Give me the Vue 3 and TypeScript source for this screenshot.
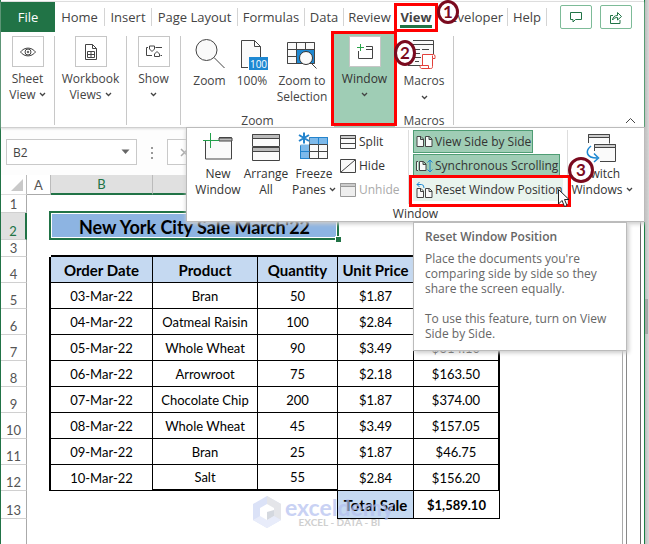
<script setup lang="ts">
import { ref } from 'vue'

interface Order {
  row: number
  date: string
  product: string
  qty: number
  price: string
  total: string
}

const tabs: string[] = ['Home', 'Insert', 'Page Layout', 'Formulas', 'Data', 'Review', 'View', 'Developer', 'Help']
const activeTab = ref('View')
const cell = ref('B2')

const orders: Order[] = [
  { row: 5, date: '03-Mar-22', product: 'Bran', qty: 50, price: '$1.87', total: '' },
  { row: 6, date: '04-Mar-22', product: 'Oatmeal Raisin', qty: 100, price: '$2.84', total: '' },
  { row: 7, date: '05-Mar-22', product: 'Whole Wheat', qty: 90, price: '$3.49', total: '$314.10' },
  { row: 8, date: '06-Mar-22', product: 'Arrowroot', qty: 75, price: '$2.18', total: '$163.50' },
  { row: 9, date: '07-Mar-22', product: 'Chocolate Chip', qty: 200, price: '$1.87', total: '$374.00' },
  { row: 10, date: '08-Mar-22', product: 'Whole Wheat', qty: 45, price: '$3.49', total: '$157.05' },
  { row: 11, date: '09-Mar-22', product: 'Bran', qty: 25, price: '$1.87', total: '$46.75' },
  { row: 12, date: '10-Mar-22', product: 'Salt', qty: 55, price: '$2.84', total: '$156.20' },
]
</script>

<template>
  <div class="page">
    <main class="window">
      <header class="top">
        <nav class="tabs">
          <button class="file" type="button">File</button>
          <button
            v-for="t in tabs"
            :key="t"
            type="button"
            class="tab"
            :class="{ active: t === activeTab }"
            @click="activeTab = t"
          >
            <span>{{ t }}</span>
            <i v-if="t === 'View'" class="mark mark-view"></i>
            <b v-if="t === 'View'" class="badge badge-one">1</b>
          </button>
          <div class="actions">
            <button type="button" aria-label="Comments">
              <svg width="14" height="13" viewBox="0 0 14 13"><path d="M1.5 1.5h11v7H6.500L4 11V8.500H1.500z" /></svg>
            </button>
            <button type="button" aria-label="Share">
              <svg width="14" height="13" viewBox="0 0 14 13"><path d="M4 4.500H1.500v8h9.500V9M3.500 9c.5-3 2-4.500 5-4.500V1.500l4 4-4 3.500V6.500C6.500 6.500 5 7 3.500 9z" /></svg>
            </button>
          </div>
        </nav>

        <div class="ribbon">
          <button class="group sheet-view" type="button">
            <span class="box">
              <svg width="18" height="12" viewBox="0 0 18 12"><path d="M1.500 6C5.500.8 12.500.8 16.500 6 12.500 11.200 5.500 11.200 1.500 6z" /><circle cx="9" cy="6" r="3" /><circle cx="9" cy="6" r=".8" /></svg>
            </span>
            <span>Sheet<br />View <svg class="chev" width="7" height="5" viewBox="0 0 7 5"><path d="M1 1l2.500 2.500L6 1" /></svg></span>
          </button>
          <button class="group workbook" type="button">
            <span class="box">
              <svg width="14" height="18" viewBox="0 0 14 18"><path d="M1.500 1.500h7l4 4v11h-11zM8.500 1.500v4h4M3.500 8.500h7v6h-7zM7 8.500v6M3.500 11.500h7" /></svg>
            </span>
            <span>Workbook<br />Views <svg class="chev" width="7" height="5" viewBox="0 0 7 5"><path d="M1 1l2.500 2.500L6 1" /></svg></span>
          </button>
          <button class="group show" type="button">
            <span class="box">
              <svg width="18" height="13" viewBox="0 0 18 13"><path d="M3 2.500H1.500v8H7M10.500 2.500H17M4.500 1h5v3L7 6.500 4.500 4zM9.500 11.500V9L12 6.500 14.500 9v2.500zM15.500 10.500H17" /></svg>
            </span>
            <span>Show<br /><svg class="chev" width="7" height="5" viewBox="0 0 7 5"><path d="M1 1l2.500 2.500L6 1" /></svg></span>
          </button>

          <section class="zoom-group">
            <div class="zoom-items">
              <button type="button">
                <svg width="32" height="32" viewBox="0 0 32 32"><circle cx="12.500" cy="12" r="10.500" class="pale" /><path d="M20 19.500L30.500 30" /></svg>
                Zoom
              </button>
              <button type="button">
                <svg width="32" height="32" viewBox="0 0 32 32"><path d="M5.500 29.500v-27h13l6 6v13M18.500 2.500v6h6" class="pale" /><path d="M5 29.500h7" /><rect x="13" y="19" width="19" height="13" fill="#1e88d2" stroke="none" /><text x="22.500" y="29.500">100</text></svg>
                100%
              </button>
              <button type="button">
                <svg width="32" height="32" viewBox="0 0 32 32"><path d="M1.500 4.500h27v21h-27z" class="pale" /><path d="M10 12h18v13H10z" fill="#1e88d2" stroke="none" /><path d="M1.500 11.500h27M1.500 18.500h9M10.500 4.500v21M19.500 4.500v7M1.500 25.500h12M28.500 4.500v21" /><circle cx="20" cy="20" r="6.500" class="pale" stroke="#333" /><path d="M24.500 24.500l6 6" /></svg>
                Zoom to<br />Selection
              </button>
            </div>
            <span class="caption">Zoom</span>
          </section>

          <button class="group window-group" type="button">
            <span class="box">
              <svg width="18" height="17" viewBox="0 0 18 17"><path d="M10 3.500h6.500v12h-14V8M10 6.500h6.500" /><path d="M1 4.500h7M4.500 1v7" stroke="#2aa34a" /></svg>
            </span>
            <span>Window<br /><svg class="chev" width="7" height="5" viewBox="0 0 7 5"><path d="M1 1l2.500 2.500L6 1" /></svg></span>
            <i class="mark mark-window"></i>
          </button>

          <section class="macros">
            <b class="badge badge-two">2</b>
            <button type="button">
              <svg width="32" height="32" viewBox="0 0 32 32"><path d="M3.500 2.500h22v24h-22z" fill="#fafafa" stroke="none" /><path d="M5 2.500h20.500v14M5 6.500h20.500" /><path d="M0 27.500h13M7 11.500h5M14 11.500h7M7 15.500h5M7 19.500h6M7 23.500h4" /><path d="M14.500 16.500h11c2 0 1.500 3 1.500 4h-2.500v8c0 2-1 2-2 2h-9c-1 0-2-2-1-3h2zM24.500 20.500v-3M13.500 27.500h7v3" fill="#fff" stroke="#e2403a" /></svg>
              Macros<br /><svg class="chev" width="7" height="5" viewBox="0 0 7 5"><path d="M1 1l2.500 2.500L6 1" /></svg>
            </button>
            <span class="caption">Macros</span>
          </section>
          <button class="collapse" type="button" aria-label="Collapse ribbon">
            <svg width="11" height="7" viewBox="0 0 11 7"><path d="M1 6l4.500-4.500L10 6" /></svg>
          </button>
        </div>

        <section class="popup">
          <div class="popup-row">
            <button class="big new-window" type="button">
              <svg width="32" height="32" viewBox="0 0 32 32"><path d="M3.500 11v18h26V7.500H17" class="pale" /><path d="M17 8h13v3H17z" fill="#bbb" stroke="#444" /><path d="M1 10.500h16M8.500 3v15" stroke="#22a04a" /></svg>
              <span>New<br />Window</span>
            </button>
            <button class="big arrange" type="button">
              <svg width="32" height="32" viewBox="0 0 32 32"><path d="M2.500 4.500h27v12h-27zM2.500 17.500h27v13h-27z" class="pale" /><path d="M2.500 4.500h27v4h-27zM2.500 17.500h27v4h-27z" fill="#bbb" /></svg>
              <span>Arrange<br />All</span>
            </button>
            <button class="big freeze" type="button">
              <svg width="32" height="32" viewBox="0 0 32 32"><path d="M11.500 7.500h18v21h-27v-13h9z" class="pale" /><path d="M11.500 7.500h18v7h-18zM2.500 14.500h9v14h-9z" fill="#7db9ea" stroke="none" /><path d="M11.500 14.500h18v14h-18zM20.500 14.500v14M11.500 21.500h18" /><path d="M12 7.500h17.500v7M20.500 7.500v7M2.500 16v12.500h9M2.500 21.500h9" stroke="#2384cd" /><path d="M6 2.500v11M1 5l10 6M11 5L1 11" stroke="#2384cd" stroke-width="2" /></svg>
              <span>Freeze<br />Panes <svg class="chev" width="7" height="5" viewBox="0 0 7 5"><path d="M1 1l2.500 2.500L6 1" /></svg></span>
            </button>
            <div class="small-list">
              <button type="button"><svg width="16" height="14" viewBox="0 0 16 14"><path d="M.5.5h15v13H.5z" class="pale" /><path d="M.5.500h15v3H.500z" fill="#ccc" /><path d="M.5 8.500h15" /></svg>Split</button>
              <button type="button"><svg width="16" height="14" viewBox="0 0 16 14"><path d="M.5.5h15v13H.5zM1 13L15 1" class="pale" /></svg>Hide</button>
              <button type="button" disabled><svg width="16" height="14" viewBox="0 0 16 14"><path d="M.5.5h15v13H.5z" fill="#eee" stroke="#999" /><path d="M.5.500h15v3H.500z" fill="#ccc" stroke="#999" /></svg>Unhide</button>
            </div>
            <div class="toggles">
              <button type="button" class="on side"><svg width="17" height="13" viewBox="0 0 17 13"><path d="M1 1.500h4l2.500 2.500v7.500H1zM9.500 1.500h4L16 4v7.500H9.500zM4.500 1.500v3h3M13 1.500v3h3" fill="#f6faf8" /></svg>View Side by Side</button>
              <button type="button" class="on sync"><svg width="17" height="14" viewBox="0 0 17 14"><path d="M2 2.500H.5v9H2M3.500 2.500h4l2.500 2.500v6.500H3.500zM7 2.500v3h3" fill="#f6faf8" /><path d="M14 1v12M11.500 3.500L14 1l2.500 2.500M11.500 10.500L14 13l2.500-2.500" stroke="#1e88d2" /></svg>Synchronous Scrolling</button>
              <button type="button" class="hover"><svg width="17" height="16" viewBox="0 0 17 16"><path d="M1 6.500h4l2.500 2.500v6.500H1zM9.500 6.500h4L16 9v6.500H9.500zM4.500 6.500v3h3M13 6.500v3h3" class="pale" /><path d="M3.500 0L1 2.500 3.500 5M1 2.500h4.500Q8 2.500 8 6" stroke="#1e88d2" /></svg>Reset Window Position
                <i class="mark mark-reset"></i>
                <b class="badge badge-three">3</b>
                <svg class="cursor" width="14" height="20" viewBox="0 0 14 20"><path d="M1.500 1.500v14.500l3.500-3.500 2.500 6 2.500-1-2.500-6h4.500z" fill="#fff" stroke="#222" /></svg>
              </button>
            </div>
            <button class="big switch" type="button">
              <svg width="32" height="32" viewBox="0 0 32 32"><path d="M2.500 4.500h21v9h-21" fill="#fafafa" stroke="none" /><path d="M2.500 13V4.500h21v9" /><path d="M2.500 4.500h21v3h-21z" fill="#ccc" /><path d="M8.500 14.500h21v17h-21z" fill="#fafafa" stroke="none" /><path d="M8.500 21v-6.500h21v17H14" /><path d="M8.500 14.500h21v3h-21z" fill="#ccc" /><path d="M5 16c-6 5-5 12 6 12M8 23.500l4.500 4.500L8 32" stroke="#1e88d2" stroke-width="1.500" /></svg>
              <span>Switch<br />Windows <svg class="chev" width="7" height="5" viewBox="0 0 7 5"><path d="M1 1l2.500 2.500L6 1" /></svg></span>
            </button>
          </div>
          <span class="caption">Window</span>
          <aside class="tooltip" role="tooltip">
            <h2>Reset Window Position</h2>
            <p>Place the documents you're<br />comparing side by side so they<br />share the screen equally.</p>
            <p>To use this feature, turn on View<br />Side by Side.</p>
          </aside>
        </section>
      </header>

      <div class="formula">
        <label class="name-box">
          <input v-model="cell" aria-label="Name box" />
          <svg width="9" height="6" viewBox="0 0 9 6"><path d="M.5.5h8l-4 4.500z" fill="#666" stroke="none" /></svg>
        </label>
        <span class="dots"><i></i><i></i><i></i></span>
        <div class="entry">
          <svg width="9" height="9" viewBox="0 0 9 9"><path d="M1 1l7 7M8 1L1 8" stroke="#aaa" stroke-width="1.500" /></svg>
        </div>
      </div>

      <div class="body">
        <div class="sheet">
          <table>
            <colgroup>
              <col class="c-row" /><col class="c-a" /><col class="c-b" /><col class="c-c" /><col class="c-d" /><col class="c-e" /><col class="c-f" /><col />
            </colgroup>
            <thead>
              <tr class="letters">
                <td class="corner"><svg width="12" height="12" viewBox="0 0 12 12"><path d="M12 0v12H0z" fill="#c9c9c9" stroke="none" /></svg></td>
                <th>A</th><th class="sel">B</th><th class="sel"></th><th class="sel"></th><th></th><th></th><th></th>
              </tr>
            </thead>
            <tbody>
              <tr class="r1"><th>1</th><td colspan="7"></td></tr>
              <tr class="r2">
                <th class="sel">2</th><td></td>
                <td class="banner" colspan="3">New York City Sale March'22<i></i></td>
                <td colspan="3"></td>
              </tr>
              <tr class="r3"><th>3</th><td></td><td class="edge" colspan="5"></td><td></td></tr>
              <tr class="head">
                <th>4</th><td class="left"></td>
                <td class="c">Order Date</td><td class="c">Product</td><td class="c">Quantity</td><td class="c">Unit Price</td><td class="c last"></td><td></td>
              </tr>
              <tr v-for="o in orders" :key="o.row" :class="{ end: o.row === 12 }">
                <th>{{ o.row }}</th><td class="left"></td>
                <td class="c">{{ o.date }}</td><td class="c thick">{{ o.product }}</td><td class="c thick">{{ o.qty }}</td><td class="c">{{ o.price }}</td><td class="c last">{{ o.total }}</td><td></td>
              </tr>
              <tr class="sum">
                <th>13</th><td></td><td></td><td></td><td class="pre"></td>
                <td class="c fill">Total Sale</td><td class="c">$1,589.10</td><td></td>
              </tr>
              <tr class="r14"><th></th><td colspan="7"></td></tr>
            </tbody>
          </table>
          <div class="watermark">
            <svg width="28" height="32" viewBox="0 0 28 32"><path d="M14 0l14 8v16l-14 8L0 24V8z" fill="#cdd6f5" stroke="none" /><path d="M14 0l14 8v16l-14-8z" fill="#d9dbe0" stroke="none" /><path d="M14 32l14-8-14-8L0 24z" fill="#dfe5f8" stroke="none" /><path d="M14 8l7 4v8l-7 4-7-4v-8z" fill="#fff" stroke="none" /><path d="M14 16v8l7-4v-6z" fill="#c3c8d2" stroke="none" /></svg>
            <div><strong>exceldemy</strong><small>EXCEL - DATA - BI</small></div>
          </div>
        </div>
        <div class="split"></div>
        <div class="track"></div>
      </div>
    </main>
    <div class="desk"><div class="thumb"></div></div>
  </div>
</template>

<style>
body { margin: 0; background: #fff; }
</style>

<style scoped>
* { box-sizing: border-box; }
.page { display: flex; min-height: 100vh; overflow: hidden; font-family: "Open Sans", "Noto Sans", sans-serif; font-size: 12px; line-height: 16px; color: #444; }
.window { flex: 1; min-width: 0; display: flex; flex-direction: column; border-left: 1px solid #217346; border-right: 1px solid #1a7f43; background: #fff; }
.desk { width: 4px; background: linear-gradient(90deg, #bcbcbc, #d9d9d9); padding-top: 299px; }
.thumb { height: 35px; background: #a6a6a6; width: 3px; }
button { font: inherit; color: inherit; background: none; border: 0; padding: 0; margin: 0; position: relative; }
svg { fill: none; stroke: #444; stroke-width: 1; display: block; overflow: visible; }
svg text { font: 10px "Open Sans", sans-serif; fill: #fff; stroke: none; text-anchor: middle; }
.pale { fill: #fafafa; }
.chev { display: inline-block; vertical-align: 2px; stroke-width: 1.3; }

.top { position: relative; z-index: 2; border-top: 1px solid #ddd; border-bottom: 1px solid #cfcfcf; box-shadow: 0 1px 2px #ddd; margin-top: 1px; height: 127px; background: #fff; }
.tabs { display: grid; grid-template-columns: 54px 50px 47px 86px 67px 39px 52px 41px 71px 39px 1fr; height: 30px; font-size: 13px; align-items: center; }
.file { align-self: stretch; background: #217346; color: #fff; }
.tab { height: 18px; border-right: 1px solid #d4d4d4; white-space: nowrap; text-align: center; display: flex; align-items: center; justify-content: center; }
.tab.active { font-weight: 700; border-right-color: transparent; z-index: 3; }
.tab.active span { position: relative; }
.tab.active span::after { content: ""; position: absolute; left: 0; right: 0; bottom: -3px; height: 3px; background: #217346; }
.actions { display: flex; justify-content: flex-end; gap: 8px; padding-right: 12px; }
.actions button { width: 32px; height: 24px; border: 1px solid #7dbb98; border-radius: 2px; display: grid; place-items: center; }
.actions svg { stroke: #217346; }

.mark { position: absolute; border: 3px solid #f00; pointer-events: none; }
.mark-view { inset: -5px -2px -6px -2px; }
.mark-window { inset: -3px -2px 1px -3px; }
.mark-reset { inset: -4px -9px -7px -5px; }
.badge { position: absolute; width: 22px; height: 24px; border: 3px solid #7a0a1e; border-radius: 50%; background: #fff; color: #7a0a1e; font: 700 17px/18px Lato, sans-serif; text-align: center; z-index: 4; }
.badge-one { left: 41px; top: -8px; }
.badge-two { left: -1px; top: 4px; height: 26px; line-height: 20px; }
.badge-three { left: 154px; top: -22px; width: 26px; height: 26px; line-height: 20px; }
.cursor { position: absolute; left: 143px; top: 9px; z-index: 5; }

.ribbon { display: flex; height: 95px; padding-top: 4px; }
.group { display: flex; flex-direction: column; align-items: center; gap: 4px; height: 89px; border-right: 1px solid #c8c8c8; }
.box { width: 32px; height: 31px; border: 1px solid #c6c6c6; display: grid; place-items: center; background: #fff; }
.sheet-view { width: 54px; }
.workbook { width: 72px; }
.show { width: 54px; }
.zoom-group { width: 153px; }
.zoom-items { display: flex; height: 77px; padding: 2px 4px 0 8px; }
.zoom-items button { display: flex; flex-direction: column; align-items: center; gap: 3px; justify-content: flex-start; padding: 0; }
.zoom-items button:nth-child(1) { width: 41px; }
.zoom-items button:nth-child(2) { width: 44px; }
.zoom-items button:nth-child(3) { width: 56px; white-space: nowrap; }
.caption { display: block; text-align: center; }
.window-group { width: 61px; height: 93px; margin-top: -2px; padding-top: 2px; background: #9fcdb5; border: 0; color: #333; }
.macros { position: relative; width: 59px; height: 89px; border-right: 1px solid #c8c8c8; }
.macros button { display: flex; flex-direction: column; align-items: center; width: 100%; height: 77px; padding-top: 2px; gap: 3px; }
.macros .chev { margin-top: 3px; }
.collapse { margin: 80px 8px 0 auto; width: 11px; height: 8px; }

.popup { position: absolute; z-index: 3; left: 185px; right: -1px; top: 125px; height: 95px; background: #fff; border: 1px solid #bbb; box-shadow: 0 2px 4px #ccc; color: #333; }
.popup-row { display: flex; height: 78px; padding-top: 2px; }
.big { display: flex; flex-direction: column; align-items: center; gap: 4px; white-space: nowrap; height: 74px; justify-content: flex-start; }
.new-window { width: 46px; margin-left: 8px; }
.arrange { width: 50px; }
.freeze { width: 46px; }
.small-list { margin-left: 3px; width: 69px; border-right: 1px solid #ddd; height: 74px; }
.small-list button { display: flex; align-items: center; gap: 3px; height: 24px; }
.small-list button:disabled { color: #aaa; }
.toggles { margin-left: 4px; width: 155px; border-right: 1px solid #ddd; display: flex; flex-direction: column; align-items: flex-start; gap: 1px; height: 74px; }
.toggles button { display: flex; align-items: center; gap: 2px; height: 23px; padding: 0 2px; white-space: nowrap; border: 1px solid transparent; width: 150px; }
.toggles .on { background: #9fcdb5; border-color: #4f9d74; }
.toggles .side { width: 120px; }
.toggles .sync { width: 147px; }
.toggles .hover { background: #e9f4ee; }
.switch { width: 68px; }

.tooltip { position: absolute; left: 226px; top: 94px; width: 214px; height: 129px; background: #fff; border: 1px solid #bbb; box-shadow: 2px 2px 4px #ccc; padding: 6px 11px; color: #666; line-height: 15px; white-space: nowrap; }
.tooltip h2 { margin: 0 0 6px; font-size: 12px; line-height: 16px; font-weight: 600; }
.tooltip p { margin: 0 0 15px; }

.formula { display: flex; align-items: flex-start; height: 47px; padding: 11px 0 0 5px; background: #fdfdfd; }
.name-box { display: flex; align-items: center; width: 131px; height: 26px; border: 1px solid #c9c9c9; padding: 0 6px; background: #fff; }
.name-box input { flex: 1; min-width: 0; border: 0; padding: 0; background: none; font: 12px "Open Sans", sans-serif; color: #444; outline: none; }
.dots { display: flex; flex-direction: column; gap: 3px; margin: 8px 14px 0; }
.dots i { width: 2px; height: 2px; background: #999; }
.entry { flex: 1; height: 26px; border: 1px solid #c9c9c9; border-right: 0; padding: 8px 12px; background: #fff; }

.body { flex: 1; display: flex; }
.sheet { flex: 1; min-width: 0; position: relative; }
.split { width: 5px; border: solid #888; border-width: 0 1px; border-left-color: #aaa; }
.track { width: 14px; border-right: 1px solid #666; margin-right: 3px; }
table { width: 100%; height: 100%; table-layout: fixed; border-collapse: separate; border-spacing: 0; font-family: Lato, sans-serif; font-size: 13px; color: #000; }
td, th { padding: 0; text-align: center; white-space: nowrap; }
.c-row { width: 26px; } .c-a { width: 24px; } .c-b { width: 102px; } .c-c { width: 105px; } .c-d { width: 80px; } .c-e { width: 76px; } .c-f { width: 86px; }
tr { height: 26px; }
.letters { height: 20px; }
.letters th { font-weight: 400; color: #555; border-bottom: 1px solid #aaa; border-right: 1px solid #bbb; }
.letters .sel { background: #e0e0e0; color: #217346; border-bottom: 2px solid #217346; }
.corner { border-right: 1px solid #bbb; border-bottom: 1px solid #ddd; }
.corner svg { margin: 3px 3px 3px auto; }
tbody th { font-weight: 400; color: #555; border-right: 1px solid #aaa; border-bottom: 1px solid #d0d0d0; vertical-align: bottom; }
tbody th.sel { background: #e0e0e0; color: #217346; border-right: 2px solid #217346; }
.r1 { height: 18px; }
.r2 { height: 27px; }
.r3 { height: 17px; }
.sum { height: 28px; }
.r14 { height: auto; }
.r14 th { border-bottom: 0; }
.banner { position: relative; background: #8db4e2; font-size: 18px; font-weight: 700; line-height: 22px; }
.banner::after { content: ""; position: absolute; inset: -2px -1px 0 -2px; border: 2px solid #217346; box-shadow: inset 0 0 0 1px #fff; }
.banner i { position: absolute; z-index: 1; right: -3px; bottom: -2px; width: 6px; height: 6px; background: #217346; border: solid #fff; border-width: 1px 0 0 1px; }
.edge { border-bottom: 2px solid #000; }
.left { border-right: 2px solid #000; }
.c { border-right: 1px solid #000; border-bottom: 1px solid #000; }
.c.last { border-right-width: 2px; }
.end .thick { border-bottom-width: 2px; }
.head .c, .sum .fill { background: #c5d9f1; font-weight: 700; font-size: 15px; line-height: 16px; }
.pre { border-right: 1px solid #000; }
.sum .c { font-weight: 700; }
.watermark { position: absolute; left: 252px; top: 321px; display: flex; gap: 4px; opacity: .7; pointer-events: none; }
.watermark strong { display: block; font: 700 23px/22px Lato, sans-serif; color: #b3c0f0; }
.watermark small { display: block; font: 700 10px/9px Lato, sans-serif; color: #bbb; text-align: center; }
</style>
